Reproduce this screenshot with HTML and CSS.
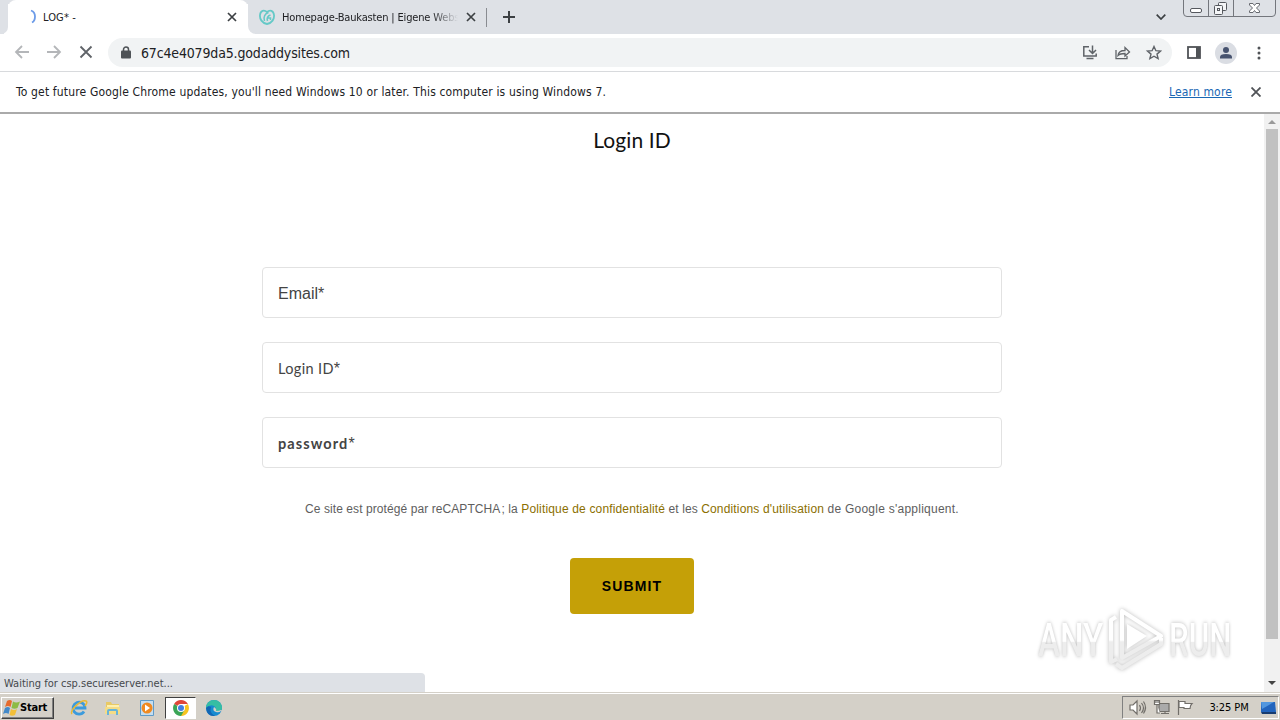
FILE: index.html
```html
<!DOCTYPE html>
<html lang="fr">
<head>
    <meta charset="UTF-8">
    <meta name="viewport" content="width=device-width, initial-scale=1.0">
    <title>LOG* -</title>
    <link rel="stylesheet" href="styles.css">
</head>
<body>
    <div class="tabs">
        <div class="edge"></div>
        <div class="tab active">
            <svg class="favicon" width="16" height="16" viewBox="0 0 16 16"><path d="M7 1.500Q11 3 11 7.500T8 13.500" fill="none" stroke="#6c9be8" stroke-width="1.800"/></svg>
            <span class="tabTitle t1">LOG* -</span>
            <svg width="10" height="10" viewBox="0 0 10 10"><path d="M1 1l8 8M9 1L1 9" stroke="#3c4043" stroke-width="1.700"/></svg>
        </div>
        <div class="tab second">
            <svg class="favicon" width="16" height="16" viewBox="0 0 16 16" fill="none" stroke="#65c9c7" stroke-width="1.800"><path d="M8 15C3 14 .5 10 1 6 1.500 1.500 5 .5 8 3c3-2.500 6.500-1.500 7 3 .500 4-2 8-7 9z"/><path d="M5.500 12C4 8 6 4.500 9.500 3.500M8.500 12C7.500 9 8.500 7 11.500 6M9 9h2.500v2" stroke-width="1.500"/></svg>
            <span class="tabTitle t2">Homepage-Baukasten | Eigene Webs</span>
            <svg width="10" height="10" viewBox="0 0 10 10"><path d="M1 1l8 8M9 1L1 9" stroke="#3c4043" stroke-width="1.700"/></svg>
        </div>
        <div class="divider"></div>
        <svg class="plus" width="12" height="12" viewBox="0 0 12 12"><path d="M6 0v12M0 6h12" stroke="#3c4043" stroke-width="2"/></svg>
        <svg class="chevron" width="10" height="6" viewBox="0 0 10 6"><path d="M.7.700L5 5 9.300.700" fill="none" stroke="#3c4043" stroke-width="1.700"/></svg>
        <svg class="winButtons" width="94" height="18" viewBox="0 0 94 18" fill="none" stroke="#73767c">
            <path d="M.5 0v13q0 3.500 3.500 3.500h85q3.500 0 3.500-3.500V0M25.500 0v16M50.500 0v16"/>
            <rect x="7.500" y="8.500" width="11" height="4" rx="1.500" fill="#fff" stroke="#55585e"/>
            <g stroke="#55585e" fill="#f4f5f7"><rect x="35.500" y="2.500" width="8" height="8" rx="1"/><rect x="31.500" y="5.500" width="8" height="9" rx="1"/><rect x="34.500" y="8.500" width="2" height="2"/></g>
            <path d="M66.500 3.500h3.500l1.500 2 1.500-2h3.500v1.500L73.500 8l3 3v1.500H73l-1.500-2-1.500 2h-3.500V11l3-3-3-3z" fill="#fff" stroke="#66696f"/>
        </svg>
    </div>

    <div class="toolbar">
        <svg class="nav" width="80" height="16" viewBox="0 0 80 16" fill="none" stroke-width="1.800">
            <path d="M15 7H2M8 1L2 7l6 6M33 7h13M40 1l6 6-6 6" stroke="#b4b6b9"/>
            <path d="M66.500 1.500l11 11M77.500 1.500l-11 11" stroke="#5f6368"/>
        </svg>
        <div class="omnibox">
            <svg width="10" height="13" viewBox="0 0 10 13"><path d="M2.500 5V3.500a2.500 2.500 0 015 0V5" fill="none" stroke="#4f5357" stroke-width="1.500"/><rect y="4.500" width="10" height="8" rx="1" fill="#4f5357"/></svg>
            <span class="url">67c4e4079da5.godaddysites.com</span>
            <svg class="actions" width="80" height="16" viewBox="0 0 80 16" fill="none" stroke="#5f6368" stroke-width="1.500">
                <path d="M7 1.800H1.800v9.200h12.400V8.500M10.500.500V8M7 5l3.500 3.500L14 5M4.500 13.500h7"/>
                <path d="M34 5v8.700h11V11M36 10.500q.500-5 7-5v-3L47.500 7 43 11V8.500q-5 0-7 2z" stroke-width="1.300"/>
                <path d="M72 1.500l1.900 4.200 4.600.400-3.500 3 1.100 4.500-4.100-2.400-4.100 2.400L69 9.100l-3.500-3 4.600-.400z" stroke-width="1.400"/>
            </svg>
        </div>
        <svg class="panel" width="14" height="13" viewBox="0 0 14 13"><rect x="1" y="1" width="12" height="11" fill="none" stroke="#505357" stroke-width="1.800"/><path d="M9 1h4v11H9z" fill="#505357"/></svg>
        <svg class="avatar" width="22" height="22" viewBox="0 0 22 22"><circle cx="11" cy="11" r="11" fill="#dadde3"/><circle cx="11" cy="8" r="3" fill="#47536f"/><path d="M5 16.500V15q0-3 6-3t6 3v1.500z" fill="#47536f"/></svg>
        <svg width="4" height="14" viewBox="0 0 4 14" fill="#505357"><circle cx="2" cy="2" r="1.500"/><circle cx="2" cy="7" r="1.500"/><circle cx="2" cy="12" r="1.500"/></svg>
    </div>

    <div class="infobar">
        <span class="notice">To get future Google Chrome updates, you'll need Windows 10 or later. This computer is using Windows 7.</span>
        <a class="learn" href="#">Learn more</a>
        <svg width="10" height="10" viewBox="0 0 10 10"><path d="M.5.500l9 9M9.500.500l-9 9" stroke="#505357" stroke-width="1.800"/></svg>
    </div>

    <div class="page">
        <div class="content">
            <h1>Login ID</h1>
            <form id="form" class="formBox">
                <div class="field"><span class="email">Email*</span></div>
                <div class="field"><span class="login">Login ID<i>*</i></span></div>
                <div class="field"><span class="password">password<i>*</i></span></div>
                <p class="recaptcha">Ce site est protégé par reCAPTCHA&#8202;; la <a href="#">Politique de confidentialité</a> et les <a href="#">Conditions d'utilisation</a> <span>de Google s'appliquent.</span></p>
                <button type="button">SUBMIT</button>
            </form>
        </div>
        <div class="scrollbar">
            <svg width="8" height="4" viewBox="0 0 8 4"><path d="M0 4l4-4 4 4z" fill="#999"/></svg>
            <div class="thumb"></div>
            <svg width="8" height="4" viewBox="0 0 8 4"><path d="M0 0l4 4 4-4z" fill="#444"/></svg>
        </div>
        <div class="status"><span>Waiting for csp.secureserver.net...</span></div>
        <div class="watermark">
            <span class="any">ANY</span>
            <svg class="play" width="58" height="64" viewBox="0 0 58 64" fill="none" stroke-linejoin="round">
                <defs>
                    <linearGradient id="fade" gradientUnits="userSpaceOnUse" x1="0" y1="0" x2="0" y2="64">
                        <stop offset=".5" stop-color="#fff"/>
                        <stop offset=".53" stop-color="#ededed"/>
                    </linearGradient>
                </defs>
                <path d="M15 3v47l39-22zM9 9L4 12v42l6-3M9 56l6 4 39-24v-6" stroke="url(#fade)" stroke-width="4"/>
                <path d="M20 16v25l20-13z" fill="#fff"/>
            </svg>
            <span class="run">RUN</span>
        </div>
    </div>

    <div class="taskbar">
        <div class="start">
            <svg width="17" height="16" viewBox="0 0 17 16"><path d="M4 1q3-2 5 0L7.500 7Q5 5 2 7z" fill="#e66b2d"/><path d="M10 1.500q3 2 7 0L14.500 8q-3 1.500-6 0z" fill="#8dbb45"/><path d="M2 8q3-2 5 0l-1.500 6Q3 12 0 14z" fill="#4389c9"/><path d="M8 9q3 2 6 0l-2 6q-3 1.500-5.500 0z" fill="#f3bf38"/></svg>
            <b>Start</b>
        </div>
        <div class="quick">
            <svg width="18" height="18" viewBox="0 0 18 18" fill="none"><path d="M14 12.500A6 6 0 1115 9H5" stroke="#3c9bdc" stroke-width="2.800"/><path d="M2 15C-1 12 11 0 16 2q2 1-1 5" stroke="#e9b934" stroke-width="1.500"/></svg>
            <svg width="18" height="18" viewBox="0 0 18 18"><path d="M2 3h5l1 2h7v10H2z" fill="#e8c965"/><path d="M3 6h12v4H3z" fill="#fff0ad"/><path d="M1 8h15v7H1z" fill="#f4dc86"/><path d="M4 16v-4q0-1 1-1h7q1 0 1 1v4" fill="none" stroke="#67b4d9" stroke-width="2"/></svg>
            <svg width="18" height="18" viewBox="0 0 18 18"><path d="M2.500 1.500h13v15h-13z" fill="#c5def0" stroke="#5f9bc9"/><circle cx="9" cy="9" r="5.500" fill="#f08a21"/><path d="M7 5.500v7l5-3.500z" fill="#fff"/></svg>
            <div class="running"><svg width="16" height="16" viewBox="0 0 16 16"><path d="M8 8l6.900-4A8 8 0 018 16z" fill="#f7c41f"/><path d="M8 8L1.100 4A8 8 0 0114.900 4H8z" fill="#df4639"/><path d="M1.100 4A8 8 0 008 16l3.500-6L8 8z" fill="#3ba557"/><circle cx="8" cy="8" r="4" fill="#fff"/><circle cx="8" cy="8" r="3" fill="#427fe1"/></svg></div>
            <svg width="18" height="18" viewBox="0 0 18 18"><circle cx="9" cy="9" r="8" fill="#168bd0"/><path d="M1 9A8 8 0 0117 9q0 3-4 3h-3q2-3-1-5-4-2-8 2z" fill="#36bea3"/><path d="M6 8q-2 6 4 9-8 1-9-8 2-3 5-1z" fill="#1267b4"/><path d="M9 8q-2 4 2 5 3 1 5-1l1.500 1.500L14 17h2l2-5-2-1q-2 1-5 1 1-2-2-4z" fill="#d4d0c8"/></svg>
        </div>
        <div class="tray">
            <svg width="66" height="18" viewBox="0 0 66 18" fill="#fff" stroke="#716e69" stroke-width="1.200">
                <path d="M1 6h3l4-4v13l-4-4H1z"/><path d="M10.500 6q2 3 0 6M12.500 4q4 5 0 10M14.500 2.500q4 6 0 12" fill="none"/>
                <path d="M30 4.500h10v8H30z" fill="#aaa"/><path d="M32 14.500h8M36 12.500v2M25.500 1.500h5v4h-5zM27 1v3M29 1v3M28 6v8h3"/>
                <path d="M49.500 1v15M50 2.500h6v2h7q-2 2-2 5h-6v-1h-5z"/>
            </svg>
            <span>3:25 PM</span>
            <svg width="16" height="14" viewBox="0 0 16 14"><path d="M1 1h14l1 10H1z" fill="#2264bd"/><path d="M1 1h13L2 8z" fill="#5297df"/><path d="M1 11h15v2H2z" fill="#183c70"/></svg>
        </div>
    </div>
</body>
</html>
```
FILE: styles.css
```css
*{
    margin: 0;
    padding: 0;
    box-sizing: border-box;
}
body{
    width: 1280px;
    height: 720px;
    overflow: hidden;
    display: flex;
    flex-direction: column;
    background: #fff;
    color: #202124;
    font-family: "DejaVu Sans Condensed", "DejaVu Sans", sans-serif;
    font-size: 11px;
}
svg{
    display: block;
    flex-shrink: 0;
}
span{
    white-space: nowrap;
}

/* browser tabs */
.tabs{
    height: 34px;
    flex-shrink: 0;
    display: flex;
    background: #dee1e6;
    align-items: center;
}
.edge{
    width: 8px;
    height: 34px;
    background: #dee1e6;
    border-bottom-right-radius: 7px;
    box-shadow: 4px 4px 0 #fff;
}
.tab{
    height: 34px;
    display: flex;
    align-items: center;
}
.active{
    width: 240px;
    padding: 0 11px 0 16px;
    background: #fff;
    border-radius: 8px 8px 0 0;
    position: relative;
}
.second{
    width: 238px;
    padding: 0 10px 0 11px;
    background: #dee1e6;
    border-bottom-left-radius: 8px;
    box-shadow: -4px 4px 0 #fff;
}
.favicon{
    margin-right: 7px;
}
.active .favicon{
    margin-right: 3px;
}
.tabTitle{
    flex: 1;
    overflow: hidden;
}
.t1{
    letter-spacing: 0.1px;
}
.t2{
    margin-right: 8px;
    letter-spacing: -0.16px;
    -webkit-mask-image: linear-gradient(to right, #000 85%, transparent);
    mask-image: linear-gradient(to right, #000 85%, transparent);
}
.divider{
    width: 1px;
    height: 19px;
    background: #898c91;
}
.plus{
    margin-left: 16px;
}
.chevron{
    margin-left: auto;
    margin-right: 17px;
}
.winButtons{
    align-self: flex-start;
    margin-right: 3px;
}

/* toolbar */
.toolbar{
    height: 38px;
    flex-shrink: 0;
    display: flex;
    align-items: center;
    background: #fff;
    border-bottom: 1px solid #d8dadd;
    padding-left: 14px;
}
.omnibox{
    width: 1064px;
    height: 29px;
    margin-left: 14px;
    padding: 0 10px 0 13px;
    border-radius: 15px;
    background: #f1f3f4;
    display: flex;
    align-items: center;
}
.url{
    margin-left: 10px;
    font-size: 14px;
    letter-spacing: -0.16px;
}
.actions{
    margin-left: auto;
}
.panel{
    margin-left: 15px;
}
.avatar{
    margin: 0 20px 0 14px;
}

/* update message */
.infobar{
    height: 42px;
    flex-shrink: 0;
    display: flex;
    align-items: center;
    padding: 0 19px 1px 16px;
    border-bottom: 2px solid #aaa;
    font-size: 12px;
}
.notice{
    letter-spacing: 0.16px;
}
.learn{
    margin-left: auto;
    margin-right: 19px;
    letter-spacing: 0.15px;
    color: #1967b4;
}

/* login page */
.page{
    height: 578px;
    flex-shrink: 0;
    display: flex;
    position: relative;
}
.content{
    width: 1264px;
    padding-top: 11px;
    text-align: center;
}
h1{
    height: 30px;
    line-height: 30px;
    font-family: Lato, sans-serif;
    font-size: 21px;
    font-weight: 400;
    letter-spacing: 0.1px;
    color: #111;
}
.formBox{
    width: 740px;
    margin: 112px auto 0;
}
.field{
    height: 51px;
    margin-bottom: 24px;
    padding: 1px 15px 0;
    border: 1px solid #e2e2e2;
    border-radius: 4px;
    display: flex;
    align-items: center;
    color: #444;
}
.field i{
    font-family: "Liberation Sans", sans-serif;
    font-size: 16px;
    font-style: normal;
    font-weight: 400;
    line-height: 1;
}
.email{
    padding-top: 1px;
    font-family: "Liberation Sans", sans-serif;
    font-size: 16px;
}
.login,
.password{
    font-family: Lato, sans-serif;
    font-size: 14.5px;
    letter-spacing: 0.35px;
}
.password{
    font-weight: 700;
    letter-spacing: 1.1px;
}
.recaptcha{
    height: 20px;
    margin-top: 31px;
    line-height: 20px;
    font-family: "Liberation Sans", sans-serif;
    font-size: 12px;
    letter-spacing: 0.08px;
    white-space: nowrap;
    color: #5e5e5e;
}
.recaptcha a{
    letter-spacing: 0.16px;
    color: #8b6f00;
    text-decoration: none;
}
.recaptcha span{
    letter-spacing: 0.25px;
}
button{
    width: 124px;
    height: 56px;
    margin-top: 39px;
    border: 0;
    border-radius: 4px;
    background: #c5a007;
    font-family: "Liberation Sans", sans-serif;
    font-size: 14px;
    font-weight: 700;
    letter-spacing: 1.1px;
    color: #000;
}
.scrollbar{
    width: 16px;
    padding: 6px 2px 7px;
    background: #f1f1f1;
    display: flex;
    flex-direction: column;
    align-items: center;
}
.thumb{
    width: 12px;
    height: 510px;
    margin: 5px 0 auto;
    background: #c1c1c1;
}
.status{
    position: absolute;
    left: 0;
    bottom: 0;
    width: 425px;
    height: 19px;
    padding-left: 4px;
    line-height: 21px;
    background: #dee1e6;
    border-top-right-radius: 4px;
    color: #45484c;
}
.watermark{
    position: absolute;
    right: 47px;
    bottom: 20px;
    display: flex;
    align-items: center;
    gap: 4px;
    font-family: Roboto, sans-serif;
    font-size: 46px;
    font-weight: 500;
    line-height: 64px;
}
.any,
.run{
    width: 104px;
    margin-right: -40px;
    transform: scaleX(0.68);
    transform-origin: left;
    color: transparent;
    background: linear-gradient(#fff 52%, #ededed 54%);
    background-clip: text;
    -webkit-background-clip: text;
    filter: drop-shadow(0 0 2px #bbb);
}
.any{
    width: 105px;
    transform: scaleX(0.72);
}
.play{
    filter: drop-shadow(0 0 2px #bbb);
}

/* windows taskbar */
.taskbar{
    height: 28px;
    flex-shrink: 0;
    padding: 3px 1px 1px;
    background: #d4d0c8;
    border-top: 1px solid #d4d0c8;
    box-shadow: inset 0 1px #fff;
    display: flex;
    align-items: center;
    color: #000;
}
.start{
    width: 53px;
    height: 22px;
    display: flex;
    align-items: center;
    border: 1px solid;
    border-color: #fff #404040 #404040 #fff;
    box-shadow: inset -1px -1px #808080;
    padding-left: 1px;
}
.start b{
    letter-spacing: -0.2px;
}
.quick{
    display: flex;
    align-items: center;
    margin-left: 16px;
    gap: 16px;
}
.running{
    width: 31px;
    height: 22px;
    margin: 0 -7px;
    display: flex;
    align-items: center;
    justify-content: center;
    background: #fff;
    border: 1px solid;
    border-color: #404040 #fff #fff #404040;
}
.tray{
    width: 157px;
    height: 23px;
    margin-left: auto;
    padding: 0 2px 0 6px;
    border: 1px solid;
    border-color: #808080 #fff #fff #808080;
    display: flex;
    align-items: center;
    justify-content: space-between;
}
.tray span{
    margin-left: 3px;
    letter-spacing: -0.1px;
}
```
